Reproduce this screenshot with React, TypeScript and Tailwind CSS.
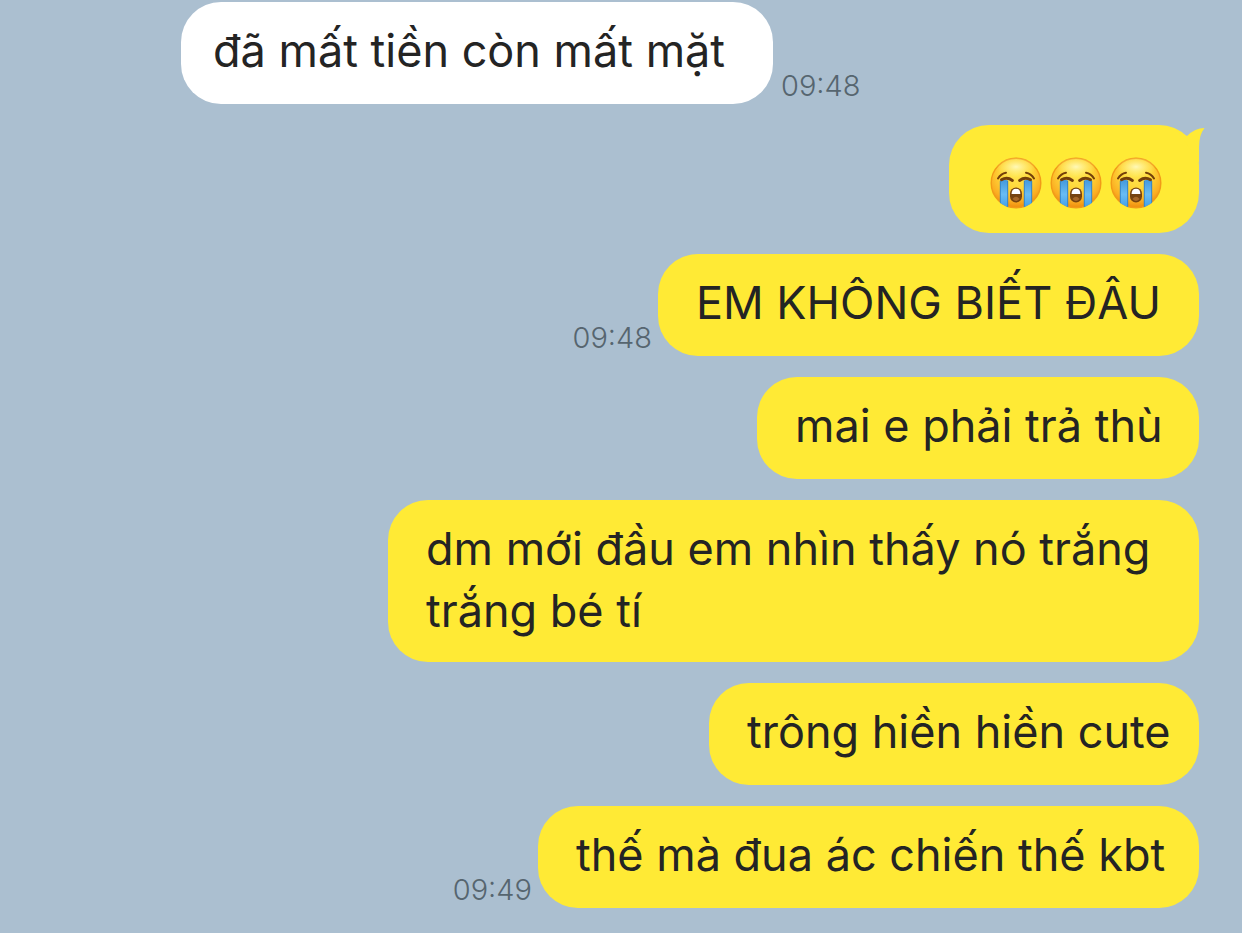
import clsx from "clsx";

type Message = {
  text: string;
  time?: string;
  mine?: boolean;
  tail?: boolean;
  crying?: number;
  width?: string;
};

const messages: Message[] = [
  { text: "đã mất tiền còn mất mặt", time: "09:48", width: "w-[592px]" },
  { text: "", crying: 3, mine: true, tail: true, width: "w-[250px]" },
  { text: "EM KHÔNG BIẾT ĐÂU", time: "09:48", mine: true, width: "w-[541px]" },
  { text: "mai e phải trả thù", mine: true, width: "w-[442px]" },
  { text: "dm mới đầu em nhìn thấy nó trắng trắng bé tí", mine: true, width: "w-[811px]" },
  { text: "trông hiền hiền cute", mine: true, width: "w-[490px]" },
  { text: "thế mà đua ác chiến thế kbt", time: "09:49", mine: true, width: "w-[661px]" },
];

const EmojiColors = () => (
  <svg className="absolute h-0 w-0" aria-hidden="true">
    <defs>
      <radialGradient id="face" cx="0.5" cy="0.32" r="0.7">
        <stop offset="0" stopColor="#ffe650" />
        <stop offset="0.45" stopColor="#ffd638" />
        <stop offset="0.78" stopColor="#fbae22" />
        <stop offset="1" stopColor="#ec860a" />
      </radialGradient>
      <radialGradient id="shine" cx="0.5" cy="0.4" r="0.5">
        <stop offset="0" stopColor="#fffbc4" stopOpacity="0.9" />
        <stop offset="1" stopColor="#fff27a" stopOpacity="0" />
      </radialGradient>
      <linearGradient id="tear" x1="0" y1="0" x2="0" y2="1">
        <stop offset="0" stopColor="#4398dc" />
        <stop offset="0.5" stopColor="#69bcf4" />
        <stop offset="1" stopColor="#3d9ce6" />
      </linearGradient>
      <clipPath id="head">
        <circle cx="26" cy="26" r="25.5" />
      </clipPath>
    </defs>
  </svg>
);

const CryingFace = () => (
  <svg viewBox="0 0 52 52" className="h-[52px] w-[52px]" role="img" aria-label="😭">
    <circle cx="26" cy="26" r="24.8" fill="url(#face)" stroke="#f29a18" strokeWidth="1.4" />
    <ellipse cx="26" cy="12" rx="20" ry="11" fill="url(#shine)" />
    <g clipPath="url(#head)">
      <path d="M10 23.5 Q14 22 18 23.5 V52 H10Z" fill="url(#tear)" />
      <path d="M34 23.5 Q38 22 42 23.5 V52 H34Z" fill="url(#tear)" />
      <path d="M10.3 24V50M17.7 24V52M34.3 24V52M41.7 24V50" stroke="#347fbd" strokeWidth="0.9" fill="none" />
    </g>
    <g fill="none" stroke="#74400b" strokeLinecap="round">
      <path d="M8 21.5 Q11 16.5 16 15.7" strokeWidth="2" />
      <path d="M44 21.5 Q41 16.5 36 15.7" strokeWidth="2" />
      <path d="M11.5 22.8 Q17 19.6 22.4 23.4" strokeWidth="3" />
      <path d="M29.6 23.4 Q35 19.6 40.5 22.8" strokeWidth="3" />
    </g>
    <rect x="20" y="30.5" width="12" height="15" rx="6" fill="#76430f" />
    <path d="M21.6 37 Q21.6 31.8 26 31.8 Q30.4 31.8 30.4 37Z" fill="#fff" />
    <path d="M22.4 42 Q26 37.5 29.6 42 Q26 46 22.4 42Z" fill="#a66728" />
  </svg>
);

const Tail = () => (
  <svg viewBox="0 0 26 36" className="absolute top-[2px] -right-[6px] h-[36px] w-[26px]" aria-hidden="true">
    <path d="M0 5 L8 9 Q16 1 25.5 1 Q20 8 20 20 V36 Z" fill="#ffea35" />
  </svg>
);

const Bubble = ({ text, time, mine, tail, crying, width }: Message) => (
  <li className={clsx("flex items-end", mine ? "flex-row-reverse gap-1.5" : "gap-2 pl-[181px]")}>
    <div
      className={clsx(
        "relative min-h-[102px] max-w-full rounded-[40px]",
        width,
        mine ? "bg-[#ffea35] pl-[38px]" : "bg-white pl-8",
        crying ? "pt-8 pb-6" : "pt-[18px] pb-5",
      )}
    >
      {tail && <Tail />}
      {crying ? (
        <div className="flex gap-2 pl-[3px]">
          {Array.from({ length: crying }, (_, i) => (
            <CryingFace key={i} />
          ))}
        </div>
      ) : (
        <p className="text-[45px] leading-[62px] text-[#242424]">{text}</p>
      )}
    </div>
    {time && <time className="text-[29px] leading-9 font-light text-[#56656f]">{time}</time>}
  </li>
);

export default function App() {
  return (
    <main className="min-h-screen bg-[#abbfd0] font-['Inter',sans-serif]">
      <EmojiColors />
      <ul className="flex flex-col gap-[21px] pt-[2px] pr-[43px] pb-6">
        {messages.map((message, i) => (
          <Bubble key={i} {...message} />
        ))}
      </ul>
    </main>
  );
}
